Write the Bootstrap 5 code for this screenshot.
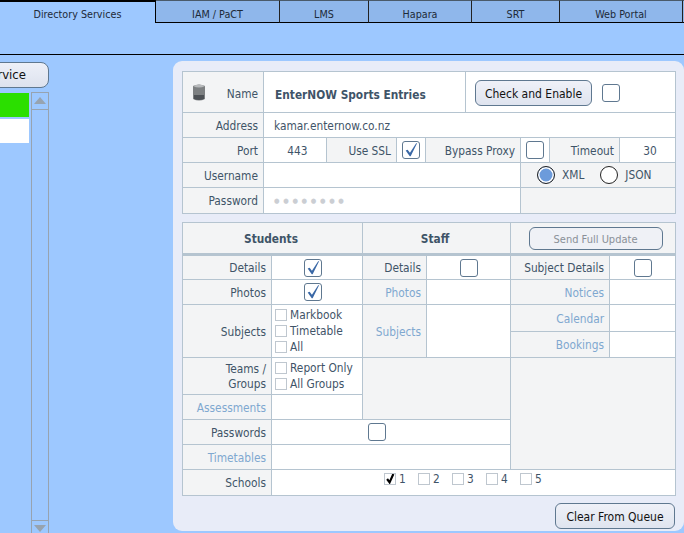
<!DOCTYPE html>
<html lang="en"><head><meta charset="utf-8"><title>Directory Services</title>
<link href="https://cdn.jsdelivr.net/npm/bootstrap@5.3.0/dist/css/bootstrap.min.css" rel="stylesheet">
<style>
html,body{height:533px;overflow:hidden}
body{background:#9DC8FF;font:11.8px/1.2 "DejaVu Sans Condensed","DejaVu Sans",sans-serif;color:#3F5468}
.tabbar{height:23px;border-bottom:1px solid #000;flex-wrap:nowrap;width:700px;font-size:10.7px}
.tabbar .tabitem{height:23px;line-height:27px;text-align:center;color:#1d2a38;background:#8FB7EB;border-top:1px solid #4a5a6a;border-right:1px solid #222;border-bottom:1px solid #000;flex:none}
.tabbar .tabitem.on{background:#9DC8FF;border-top:2px solid #000;border-right:1px solid #000;border-bottom:0;line-height:26px;width:156px}
.subbar{height:32px;border-bottom:1px solid #000}
.mainrow{height:478px}
.rail{width:49px;flex:none;padding-top:7px}
.svc{flex:none;width:110px;height:26px;border:1px solid #5F7890;border-radius:8px;background:linear-gradient(#EDF0F8,#DDE2EE);color:#111;font-size:13px;text-align:right;padding:0 22px 0 0;line-height:22px}
.listbox{height:450px;margin-top:4px}
.rows{width:31px;flex:none;padding-top:1px}
.rowgreen{height:24px;width:29px;background:#2BDF00;margin-bottom:2px}
.rowwhite{height:24px;width:29px;background:#fff}
.sbar{width:18px;flex:none;border:1px solid #97A3B0;border-width:1px 1px 0 1px}
.sbtn{height:17px;border-bottom:1px solid #97A3B0}
.sbtn svg{display:block;margin:4px auto 0}
.sbar .grow{flex:1}
.sbtn.dn{border-bottom:0;border-top:1px solid #97A3B0;height:22px}
.panel{margin:6px 0 0 124px;width:511px;height:470px;background:#E8ECF8;border-radius:9px;padding:10px 9px 0 9px}
.grid{table-layout:fixed;border-collapse:collapse;width:493px;margin:0;--bs-table-bg:transparent;color:#3F5468}
.grid td,.grid th{border:1px solid #B5C4D0;padding:2px 5px 0;background:#fff;vertical-align:middle;color:#3F5468;box-shadow:none;font-weight:400;overflow:hidden;white-space:nowrap}
.grid td.lb{background:#F3F4F5;text-align:right}
.grid td.gr{background:#F3F4F5}
.grid td.mt{color:#7FA8D0}
.grid th.hd{font-weight:700;background:#F3F4F5;text-align:center;border-bottom:3px solid #B5C4D0;padding-right:8px}
.ctr{text-align:center}
.r25{height:25px}.r26{height:26px}.r27{height:27px}.r41{height:41px}.r37{height:37px}.r32{height:32px}
.grid td.nametxt{font-weight:700;padding:6px 0 0 11px;font-size:11.8px}
.grid td.namelb{padding-top:0}
.namelb span{padding-top:5px}
.grid td.pad{padding-left:10px}
.grid td.dotcell{padding:0 5px 2px 10px}
.grid td.porttxt{padding-left:10px}
.grid td.toval{padding-left:10px}
.grid td.nopad{padding:0}
.grid td.shift3{padding:0 8px 0 0}
.grid td.shift13{padding:0 29px 0 0}
.grid td.optcell{padding:0 0 0 3px}
.grid td.schcell{padding:0 20px 7px 0}
.dots{color:#CBCED3;letter-spacing:3.7px;font-size:7px}
input.cbx.form-check-input,input.cbx.form-check-input:focus{appearance:none;width:18px;height:18px;margin:0;border:1px solid #5F7890;border-radius:3px;background:#fff;box-shadow:none;vertical-align:middle;float:none;display:inline-block}
input.cbx.form-check-input:checked{background:#fff url("data:image/svg+xml,%3Csvg xmlns='http://www.w3.org/2000/svg' viewBox='0 0 18 18'%3E%3Cpath d='M3 9.5 5.2 8.6 7.8 12.2 15 1.2 15.7 1.7 8.6 16H7.6Z' fill='%233A68A6'/%3E%3C/svg%3E") center/100% no-repeat}
input.mini.form-check-input,input.mini.form-check-input:focus{appearance:none;width:12px;height:12px;margin:0;border:1px solid #BFC7CF;border-radius:0;background:#fff;box-shadow:none;float:none;display:block;flex:none}
input.mini.form-check-input:checked{background:#fff url("data:image/svg+xml,%3Csvg xmlns='http://www.w3.org/2000/svg' viewBox='0 0 12 12'%3E%3Cpath d='M2.5 6 5.5 10 10 0' fill='none' stroke='%23000' stroke-width='2.6'/%3E%3C/svg%3E") center/100% no-repeat}
.lineopt{display:flex;align-items:center;gap:3px;height:16px}
.radiobox{width:18px;height:18px;border:1px solid #222;border-radius:50%;background:#fff;flex:none;display:inline-block}
.radiobox.sel{background:#6C9BDB;box-shadow:inset 0 0 0 1.5px #fff}
.radiotxt{margin-left:7px;padding-top:1px}
.gbtn{height:26px;border:1px solid #5F7890;border-radius:6px;background:linear-gradient(#EFF1F8,#DFE4EF);color:#111;font-size:12px;padding:1px 0 0;line-height:24px}
.gbtn.off{color:#8A9098;height:23px;line-height:21px;width:134px;background:#EFF1F6;font-size:11px;margin-left:5px}
.chk{width:117px}.clr{width:120px}
.namebox{gap:10px;padding:2px 0 0 9px}
.tbl2{margin-top:8px!important}
.foot{margin-top:7px;padding-right:0}
.school{gap:11px}
.sch{gap:3px;width:23px}
.srvico{margin-top:2px;filter:blur(.4px)}
</style></head>
<body>
<ul class="nav tabbar">
<li class="tabitem on">Directory Services</li>
<li class="tabitem" style="width:124px">IAM / PaCT</li>
<li class="tabitem" style="width:89px">LMS</li>
<li class="tabitem" style="width:103px">Hapara</li>
<li class="tabitem" style="width:88px">SRT</li>
<li class="tabitem" style="width:123px">Web Portal</li>
<li class="tabitem" style="width:20px"></li>
</ul>
<div class="subbar"></div>
<div class="d-flex mainrow">
<div class="rail">
<div class="d-flex justify-content-end"><button class="svc" type="button">Service</button></div>
<div class="d-flex listbox">
<div class="rows"><div class="rowgreen"></div><div class="rowwhite"></div></div>
<div class="sbar d-flex flex-column">
<div class="sbtn"><svg width="12" height="7"><path d="M6 0 12 7H0z" fill="#97A3B0"/></svg></div>
<div class="grow"></div>
<div class="sbtn dn"><svg width="12" height="7"><path d="M0 0H12L6 7z" fill="#97A3B0"/></svg></div>
</div>
</div>
</div>
<div class="panel">
<table class="table grid">
<colgroup><col style="width:81px"><col style="width:63px"><col style="width:70px"><col style="width:29px"><col style="width:40px"><col style="width:55px"><col style="width:29px"><col style="width:70px"><col style="width:56px"></colgroup>
<tr class="r41">
<td class="lb namelb"><div class="d-flex align-items-center justify-content-between ps-1">
<svg class="srvico" width="14" height="18" viewBox="0 0 14 18"><path d="M1 2Q7-1 13 2V15Q7 18 1 15Z" fill="#7D8082"/><path d="M1 2Q7-1 13 2Q7 5 1 2Z" fill="#B8BABC"/><path d="M2 11H12V15Q7 17 2 15Z" fill="#4D5156"/></svg><span>Name</span></div></td>
<td colspan="4" class="nametxt">EnterNOW Sports Entries</td>
<td colspan="4" class="nopad"><div class="d-flex align-items-center namebox"><button class="gbtn chk" type="button">Check and Enable</button><input class="form-check-input cbx" type="checkbox" aria-label="Enable"></div></td>
</tr>
<tr class="r25"><td class="lb">Address</td><td colspan="8" class="pad">kamar.enternow.co.nz</td></tr>
<tr class="r25"><td class="lb">Port</td><td class="ctr porttxt">443</td><td class="lb">Use SSL</td><td class="ctr nopad"><input class="form-check-input cbx" type="checkbox" checked aria-label="Use SSL"></td><td class="lb" colspan="2">Bypass Proxy</td><td class="ctr nopad"><input class="form-check-input cbx" type="checkbox" aria-label="Bypass Proxy"></td><td class="lb">Timeout</td><td class="ctr toval">30</td></tr>
<tr class="r25"><td class="lb">Username</td><td colspan="5"></td><td colspan="3" class="gr nopad"><div class="d-flex align-items-center" style="padding-left:16px"><span class="radiobox sel"></span><span class="radiotxt">XML</span><span class="radiobox" style="margin-left:16px"></span><span class="radiotxt">JSON</span></div></td></tr>
<tr class="r26"><td class="lb">Password</td><td colspan="5" class="dotcell"><span class="dots">●●●●●●●●</span></td><td colspan="3" class="gr"></td></tr>
</table>
<table class="table grid tbl2">
<colgroup><col style="width:89px"><col style="width:91px"><col style="width:64px"><col style="width:84px"><col style="width:99px"><col style="width:66px"></colgroup>
<tr class="r32"><th colspan="2" class="hd">Students</th><th colspan="2" class="hd">Staff</th><th colspan="2" class="hd p-0"><button class="gbtn off" type="button">Send Full Update</button></th></tr>
<tr class="r25"><td class="lb">Details</td><td class="ctr shift3"><input class="form-check-input cbx" type="checkbox" checked aria-label="Student details"></td><td class="lb">Details</td><td class="ctr nopad"><input class="form-check-input cbx" type="checkbox" aria-label="Staff details"></td><td class="lb">Subject Details</td><td class="ctr nopad"><input class="form-check-input cbx" type="checkbox" aria-label="Subject details"></td></tr>
<tr class="r25"><td class="lb">Photos</td><td class="ctr shift3"><input class="form-check-input cbx" type="checkbox" checked aria-label="Student photos"></td><td class="lb mt">Photos</td><td></td><td class="lb mt">Notices</td><td></td></tr>
<tr class="r27"><td class="lb" rowspan="2">Subjects</td><td rowspan="2" class="optcell"><div class="lineopt"><input class="form-check-input mini" type="checkbox" aria-label="Markbook">Markbook</div><div class="lineopt"><input class="form-check-input mini" type="checkbox" aria-label="Timetable">Timetable</div><div class="lineopt"><input class="form-check-input mini" type="checkbox" aria-label="All">All</div></td><td class="lb mt" rowspan="2">Subjects</td><td rowspan="2"></td><td class="lb mt">Calendar</td><td></td></tr>
<tr class="r26"><td class="lb mt">Bookings</td><td></td></tr>
<tr class="r37"><td class="lb lh-sm">Teams /<br>Groups</td><td class="optcell"><div class="lineopt"><input class="form-check-input mini" type="checkbox" aria-label="Report Only">Report Only</div><div class="lineopt"><input class="form-check-input mini" type="checkbox" aria-label="All Groups">All Groups</div></td><td colspan="2" rowspan="2" class="gr"></td><td colspan="2" rowspan="4" class="gr"></td></tr>
<tr class="r25"><td class="lb mt">Assessments</td><td></td></tr>
<tr class="r25"><td class="lb">Passwords</td><td colspan="3" class="ctr shift13"><input class="form-check-input cbx" type="checkbox" aria-label="Passwords"></td></tr>
<tr class="r25"><td class="lb mt">Timetables</td><td colspan="3"></td></tr>
<tr class="r26"><td class="lb">Schools</td><td colspan="5" class="schcell"><div class="d-flex justify-content-center school">
<span class="d-flex align-items-center sch"><input class="form-check-input mini" type="checkbox" checked aria-label="School 1">1</span>
<span class="d-flex align-items-center sch"><input class="form-check-input mini" type="checkbox" aria-label="School 2">2</span>
<span class="d-flex align-items-center sch"><input class="form-check-input mini" type="checkbox" aria-label="School 3">3</span>
<span class="d-flex align-items-center sch"><input class="form-check-input mini" type="checkbox" aria-label="School 4">4</span>
<span class="d-flex align-items-center sch"><input class="form-check-input mini" type="checkbox" aria-label="School 5">5</span>
</div></td></tr>
</table>
<div class="d-flex justify-content-end foot"><button class="gbtn clr" type="button">Clear From Queue</button></div>
</div>
</div>
</body></html>
